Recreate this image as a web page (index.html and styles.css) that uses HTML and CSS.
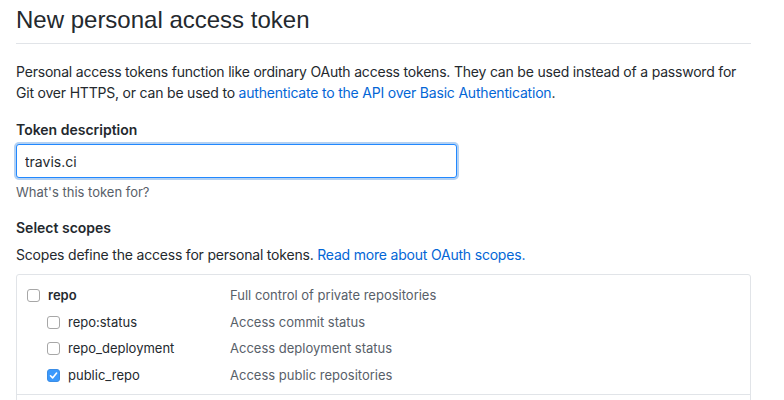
FILE: index.html
```html
<!DOCTYPE html>
<html>
<head>
<meta charset="utf-8">
<link rel="stylesheet" href="styles.css">
</head>
<body>
<div class="page">
  <div class="subhead">
    <h2 class="subhead-title">New personal access token</h2>
  </div>
  <p class="intro">Personal access tokens function like ordinary OAuth access tokens. They can be used instead of a password for Git over HTTPS, or can be used to <a href="#">authenticate to the API over Basic Authentication</a>.</p>

  <dl class="form-group">
    <dt><label class="label">Token description</label></dt>
    <dd>
      <input class="input" type="text" value="travis.ci">
      <p class="note">What's this token for?</p>
    </dd>
  </dl>

  <dl class="form-group scopes-group">
    <dt><label class="label">Select scopes</label></dt>
    <dd>
      <p class="scopes-desc">Scopes define the access for personal tokens. <a href="#">Read more about OAuth scopes.</a></p>
      <div class="scopes-box">
        <div class="scope-group">
          <div class="scope-row">
            <div class="scope-name top"><span class="cb"></span><strong>repo</strong></div>
            <div class="scope-desc">Full control of private repositories</div>
          </div>
          <div class="scope-row">
            <div class="scope-name sub"><span class="cb"></span>repo:status</div>
            <div class="scope-desc">Access commit status</div>
          </div>
          <div class="scope-row">
            <div class="scope-name sub"><span class="cb"></span>repo_deployment</div>
            <div class="scope-desc">Access deployment status</div>
          </div>
          <div class="scope-row">
            <div class="scope-name sub"><span class="cb checked"><svg width="9" height="9" viewBox="0 0 9 9"><path d="M1.5 4.8 L3.6 6.9 L7.6 2" fill="none" stroke="#fff" stroke-width="1.6" stroke-linecap="round" stroke-linejoin="round"/></svg></span>public_repo</div>
            <div class="scope-desc">Access public repositories</div>
          </div>
        </div>
        <div class="scope-group next"></div>
      </div>
    </dd>
  </dl>
</div>
</body>
</html>
```

FILE: styles.css
```css
* { box-sizing: border-box; }
html, body {
  margin: 0;
  padding: 0;
  background: #fff;
  overflow: hidden;
}
body {
  font-family: Inter, "Liberation Sans", Arial, sans-serif;
  font-size: 14px;
  line-height: 21px;
  color: #24292e;
}
.page {
  width: 735px;
  margin-left: 16px;
}
.subhead {
  padding-top: 5px;
  padding-bottom: 8px;
  border-bottom: 1px solid #e1e4e8;
}
.subhead-title {
  margin: 0;
  font-family: "Liberation Sans", Arial, sans-serif;
  font-size: 24px;
  font-weight: 400;
  line-height: 30px;
}
.intro {
  margin: 17px 0 0;
  letter-spacing: -0.2px;
}
a {
  color: #0366d6;
  text-decoration: none;
}
.form-group {
  margin: 16px 0 0;
}
.form-group dt, .form-group dd {
  margin: 0;
}
.label {
  font-weight: 600;
}
.input {
  display: block;
  margin-top: 4px;
  width: 441px;
  height: 34px;
  padding: 0 8px;
  font-family: Inter, "Liberation Sans", Arial, sans-serif;
  font-size: 14px;
  color: #24292e;
  border: 1px solid #2188ff;
  border-radius: 3px;
  outline: none;
  box-shadow: 0 0 0 2px rgba(3, 102, 214, 0.3);
}
.note {
  margin: 5px 0 0;
  font-size: 13px;
  line-height: 18px;
  color: #586069;
}
.scopes-group {
  margin-top: 16px;
}
.scopes-desc {
  margin: 6px 0 0;
  letter-spacing: -0.2px;
}
.scopes-box {
  margin-top: 9px;
  border: 1px solid #e1e4e8;
  border-radius: 3px;
  width: 735px;
}
.scope-group {
  padding: 7px 0 5px;
}
.scope-group.next {
  border-top: 1px solid #e1e4e8;
  height: 20px;
}
.scope-row {
  display: flex;
  align-items: center;
  height: 26.7px;
  font-size: 13px;
}
.scope-name {
  display: flex;
  align-items: center;
  width: 213px;
}
.scope-name.top {
  padding-left: 10px;
}
.scope-name.sub {
  padding-left: 30px;
}
.scope-name strong {
  font-weight: 600;
}
.cb {
  display: inline-flex;
  align-items: center;
  justify-content: center;
  width: 13px;
  height: 13px;
  margin-right: 8px;
  border: 1px solid #a7a7a7;
  border-radius: 3px;
  background: #fff;
  flex: none;
}
.cb.checked {
  background: #3b99fc;
  border-color: #3b8de6;
}
.scope-desc {
  color: #586069;
}
```
